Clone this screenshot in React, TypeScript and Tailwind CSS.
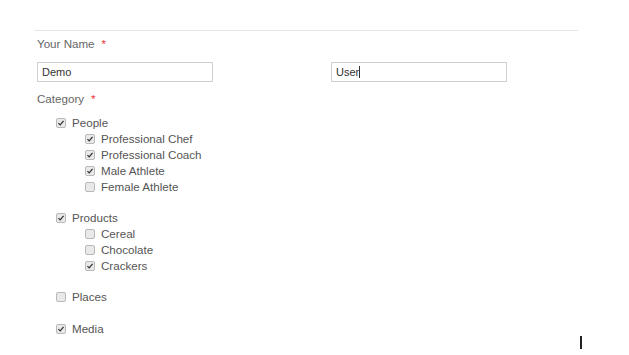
import React from "react";

type Item = { label: string; checked: boolean; children?: { label: string; checked: boolean }[] };

const categories: Item[] = [
  {
    label: "People",
    checked: true,
    children: [
      { label: "Professional Chef", checked: true },
      { label: "Professional Coach", checked: true },
      { label: "Male Athlete", checked: true },
      { label: "Female Athlete", checked: false },
    ],
  },
  {
    label: "Products",
    checked: true,
    children: [
      { label: "Cereal", checked: false },
      { label: "Chocolate", checked: false },
      { label: "Crackers", checked: true },
    ],
  },
  { label: "Places", checked: false },
  { label: "Media", checked: true },
];

function Box({ checked }: { checked: boolean }) {
  return (
    <span className="flex h-[10px] w-[10px] items-center justify-center rounded-[2px] border border-[#b9b9b9] bg-[#e9e9e9]">
      {checked && (
        <svg viewBox="0 0 10 10" className="h-[8px] w-[8px]">
          <path d="M1.8 5.2 L4 7.4 L8.2 2.4" fill="none" stroke="#333" strokeWidth="1.6" />
        </svg>
      )}
    </span>
  );
}

function CheckRow({ label, checked }: { label: string; checked: boolean }) {
  return (
    <div className="flex h-4 items-center gap-[6px] text-[11.6px] text-[#555]">
      <Box checked={checked} />
      <span>{label}</span>
    </div>
  );
}

function Label({ text }: { text: string }) {
  return (
    <div className="flex h-4 items-center text-[11.6px] text-[#666]">
      {text}
      <span className="ml-[7px] text-[#e33]">*</span>
    </div>
  );
}

export default function App() {
  return (
    <div className="relative h-[355px] w-[629px] bg-white font-['Liberation_Sans',Arial,sans-serif]">
      <div className="ml-[34px] w-[544px] pt-[30px]">
        <div className="border-t border-[#e6e6e6] pl-[3px] pt-[5px]">
          <Label text="Your Name" />
          <div className="mt-[10px] flex">
            <div className="flex h-[20px] w-[176px] items-center border border-[#cfcfcf] px-[4px] text-[11px] text-[#333]">
              Demo
            </div>
            <div className="ml-[118px] flex h-[20px] w-[176px] items-center border border-[#cfcfcf] px-[4px] text-[11px] text-[#333]">
              User<span className="h-[12px] w-px bg-[#333]" />
            </div>
          </div>
          <div className="mt-[9px]">
            <Label text="Category" />
          </div>
          <div className="ml-[19px] mt-[8px]">
            {categories.map((c, i) => (
              <div key={c.label} className={i === 2 ? "mb-[16px]" : "mb-[15px]"}>
                <CheckRow label={c.label} checked={c.checked} />
                {c.children && (
                  <div className="ml-[29px]">
                    {c.children.map((s) => (
                      <CheckRow key={s.label} label={s.label} checked={s.checked} />
                    ))}
                  </div>
                )}
              </div>
            ))}
          </div>
        </div>
      </div>
      <div className="absolute left-[580px] top-[336px] h-[13px] w-[2px] bg-[#222]" />
    </div>
  );
}
